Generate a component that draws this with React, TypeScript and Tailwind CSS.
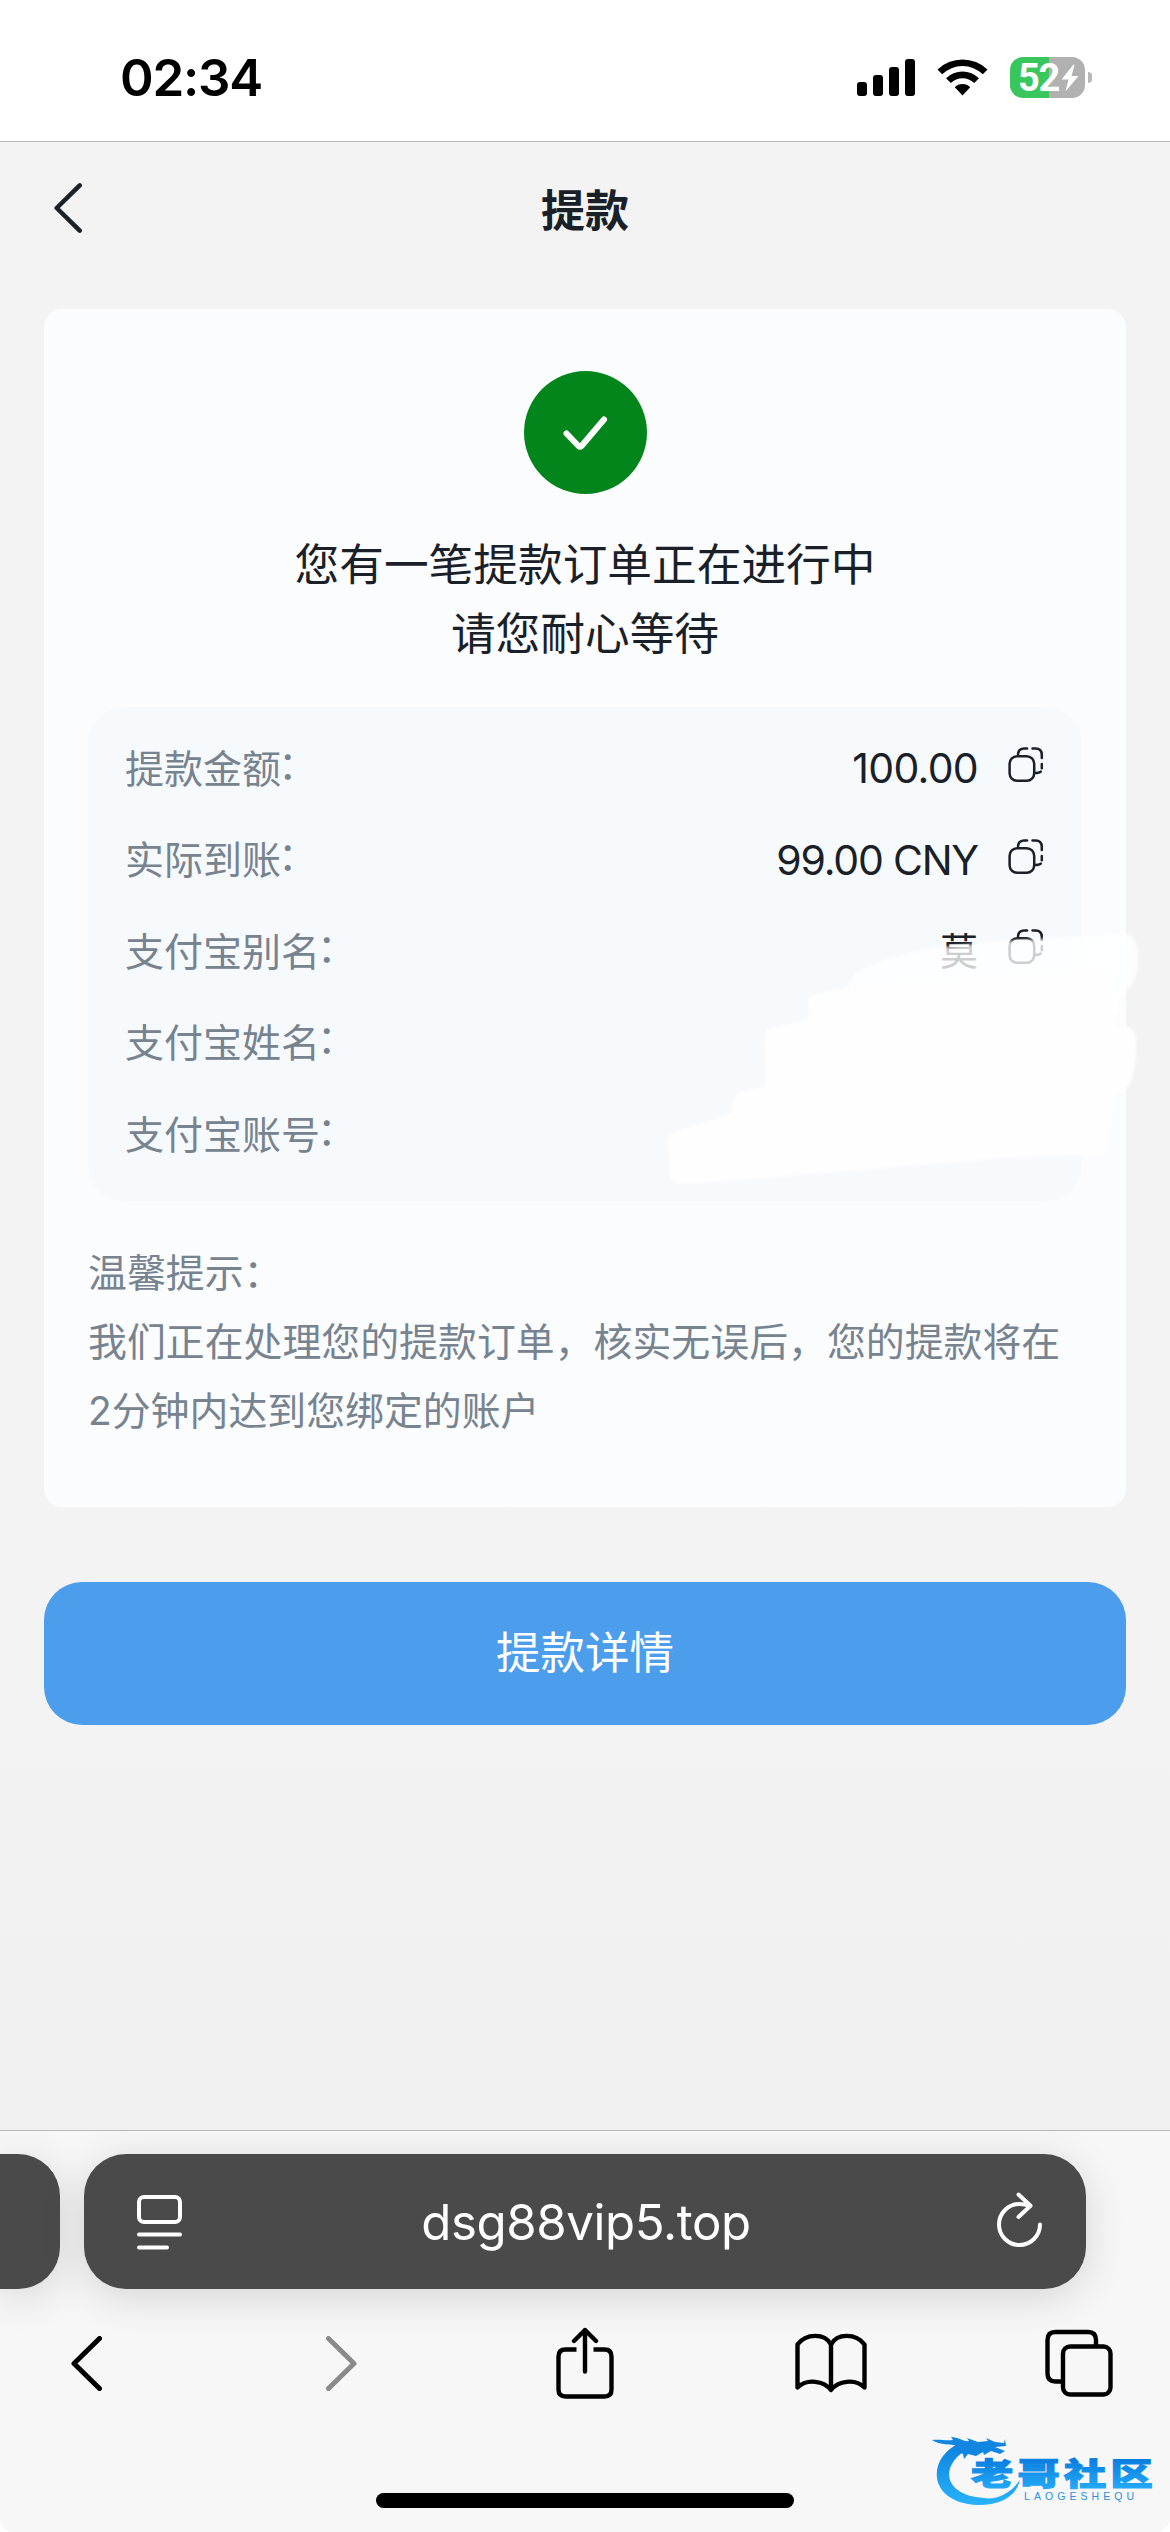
import { clsx } from "clsx";

const rows = [
  { label: "提款金额", value: "100.00", text: "text-[41px] tracking-[-0.7px]", icon: "-mt-[8px]" },
  { label: "实际到账", value: "99.00 CNY", text: "text-[41px] tracking-[-1.2px]", icon: "-mt-[6px]" },
  { label: "支付宝别名", value: "莫", text: "text-[38px]", icon: "-mt-[9px]" },
  { label: "支付宝姓名" },
  { label: "支付宝账号" },
];

function StatusBar() {
  return (
    <div className="h-[142px] shrink-0 bg-white border-b border-[#b8baba] flex items-start justify-between pl-[120px] pr-[78px] pt-[57px]">
      <span className="text-[51px] leading-[42px] font-semibold text-black tracking-[-1.2px]">
        02:34
      </span>
      <div className="flex items-start">
        <svg width="58" height="42" viewBox="0 0 58 42" className="mr-[22px]">
          <rect x="0" y="25" width="10" height="14" rx="3" />
          <rect x="16" y="18" width="10" height="21" rx="3" />
          <rect x="32" y="10" width="10" height="29" rx="3" />
          <rect x="48" y="2" width="10" height="37" rx="3" />
        </svg>
        <svg width="51" height="42" viewBox="0 0 51 42" className="mr-[22px]">
          <path d="M0.5 12.5 A36 36 0 0 1 50.5 12.5 L45.8 17.3 A29 29 0 0 0 5.2 17.3 Z" />
          <path d="M9 21.2 A23.5 23.5 0 0 1 42 21.2 L37.2 26 A17 17 0 0 0 13.8 26 Z" />
          <path d="M17.8 30.2 A11 11 0 0 1 33.2 30.2 L25.5 38.5 Z" />
        </svg>
        <div className="flex h-[41px] w-[75px] items-center rounded-[13px] bg-linear-to-r from-[#39c65d] from-52% to-[#b1b1b1] to-52% pl-[8px]">
          <span className="w-[43px] font-[Roboto] text-[38px] leading-[40px] font-bold tracking-[-1.2px] text-white">
            52
          </span>
          <svg width="18" height="28" viewBox="0 0 18 28" fill="#fff">
            <path d="M12.5 0.5 L0.5 15.5 H7.5 L4.5 27.5 L17.5 12 H10.5 L13.5 1 Z" />
          </svg>
        </div>
        <div className="ml-[3px] mt-[15px] h-[11px] w-[4px] rounded-r-full bg-[#b8b8b8]" />
      </div>
    </div>
  );
}

function CopyIcon({ className }: { className?: string }) {
  return (
    <svg
      width="36"
      height="36"
      viewBox="0 0 36 36"
      fill="none"
      stroke="#1a2027"
      strokeWidth="2.5"
      strokeLinecap="round"
      className={className}
    >
      <rect x="1.6" y="9.2" width="24.6" height="24.6" rx="7.5" />
      <path d="M10 7.5 C10.2 4.2 11.8 2 14.6 1.7" />
      <path d="M16 1.6 H19" />
      <path d="M24.5 1.6 H27.5 C31.5 1.6 33.8 4 33.8 8 V11" />
      <path d="M33.8 17 V21.2" />
      <path d="M32.8 24.6 C31.8 25.6 30 26 27 26" />
    </svg>
  );
}

/* white marker over the private account fields */
function Scribble() {
  return (
    <svg
      width="480"
      height="270"
      viewBox="0 0 480 270"
      className="absolute left-[574px] top-[222px] blur-[1.5px]"
    >
      <path
        d="M182 77 Q183 47 205 38 Q240 22 300 16 Q380 9 462 5 Q474 6 476 22 Q477 57 463 61 L440 130 L190 130 Z"
        fill="#fff"
        opacity="0.78"
      />
      <path
        d="M182 60 L150 66 Q146 70 146 92 L105 100 Q102 106 104 158 L75 164 Q70 173 70 185 L12 203 Q6 206 6 215 L9 251 Q13 257 60 252 L240 237 L355 228 L443 225 Q450 220 451 169 L466 158 Q475 145 474 107 Q472 98 464 98 L452 98 L450 45 Q380 44 340 49 Q260 53 182 60 Z"
        fill="#fefefe"
      />
    </svg>
  );
}

function Chevron({ flip, className }: { flip?: boolean; className?: string }) {
  return (
    <svg
      viewBox="0 0 31 55"
      fill="none"
      stroke="currentColor"
      strokeWidth="5"
      strokeLinecap="round"
      strokeLinejoin="round"
      className={clsx(flip && "-scale-x-100", className)}
    >
      <path d="M28.5 2.5 L3 27.5 L28.5 52.5" />
    </svg>
  );
}

function ResultCard() {
  return (
    <div className="mx-[44px] h-[1198px] rounded-[18px] bg-[#fbfcfe] px-[44px] pt-[62px]">
      <div className="mx-auto flex size-[123px] items-center justify-center rounded-full bg-[#02851b]">
        <svg width="46" height="36" viewBox="0 0 46 36" fill="none" stroke="#fff" strokeWidth="6" strokeLinecap="round" strokeLinejoin="round">
          <path d="M4.5 18.5 L16.5 31 Q18 32.3 19.5 31 L42 4.5" />
        </svg>
      </div>
      <p className="mt-[37px] text-center text-[44.7px] leading-[69px] text-[#1a2027]">
        您有一笔提款订单正在进行中
        <br />
        请您耐心等待
      </p>

      <div className="relative mt-[38px] h-[494px] rounded-[36px] bg-[#f7fafd] px-[37px] pt-[16px]">
        {rows.map((row) => (
          <div key={row.label} className="flex h-[91.5px] items-center">
            <span className="text-[39px] leading-[60px] text-[#77838f]">{row.label}</span>
            <span className="-ml-[3px] mb-[8px] text-[39px] leading-[60px] text-[#77838f]">：</span>
            {row.value && (
              <>
                <span className={clsx("ml-auto text-[#1a2027]", row.text)}>{row.value}</span>
                <CopyIcon className={clsx("ml-[30px] mr-px", row.icon)} />
              </>
            )}
          </div>
        ))}
        <Scribble />
      </div>

      <p className="-mr-5 mt-[37px] text-[38.9px] leading-[69px] text-[#77838f]">
        温馨提示：
        <br />
        我们正在处理您的提款订单，核实无误后，您的提款将在
        <br />
        2分钟内达到您绑定的账户
      </p>
    </div>
  );
}

function AddressBar() {
  return (
    <div className="flex h-[135px] gap-6">
      <div className="w-[60px] rounded-r-[42px] bg-[#4a4a4a] shadow-[0_8px_44px_rgba(0,0,0,0.14)]" />
      <div className="flex w-[1002px] items-center justify-between rounded-[42px] bg-[#4a4a4a] pl-[52px] pr-[43px] shadow-[0_8px_44px_rgba(0,0,0,0.14)]">
        <svg width="47" height="56" viewBox="0 0 47 56" fill="none" stroke="#fff" strokeWidth="4" strokeLinecap="round">
          <rect x="3" y="3" width="41" height="25" rx="5" />
          <path d="M3 40.5 H44 M3 53.5 H31" />
        </svg>
        <span className="mr-[8px] text-[49.2px] leading-[60px] tracking-[-0.4px] text-white">dsg88vip5.top</span>
        <svg width="46" height="56" viewBox="0 0 46 56" fill="none" stroke="#fff" strokeWidth="4" strokeLinecap="round" strokeLinejoin="round" className="overflow-visible">
          <path d="M43 30.5 A20.5 20.5 0 1 1 22.5 10 Q28 10 33 12" />
          <path d="M21.5 0.5 L33.5 11.8 L21.5 23" />
        </svg>
      </div>
    </div>
  );
}

function Toolbar() {
  return (
    <div className="flex h-[72px] items-center pl-[71px]">
      <Chevron className="h-[55px] w-[31px]" />
      <Chevron flip className="ml-[224px] h-[55px] w-[31px] text-[#8a8a8a]" />
      <svg width="58" height="72" viewBox="0 0 58 72" fill="none" stroke="#000" strokeWidth="4.4" strokeLinecap="round" strokeLinejoin="round" className="ml-[199px]">
        <path d="M20.5 22.5 H9.5 Q2.5 22.5 2.5 29.5 V62.5 Q2.5 69.5 9.5 69.5 H48.5 Q55.5 69.5 55.5 62.5 V29.5 Q55.5 22.5 48.5 22.5 H37.5" strokeLinecap="butt" />
        <path d="M29 44.5 V3 M18 14 L29 3 L40 14" />
      </svg>
      <svg width="72" height="60" viewBox="0 0 72 60" fill="none" stroke="#000" strokeWidth="4.4" strokeLinecap="round" strokeLinejoin="round" className="ml-[181px]">
        <path d="M36 57 C29 48 12 45 2.5 54.5 V11.5 C11 0 30 0 36 11.5 C42 0 61 0 69.5 11.5 V54.5 C60 45 43 48 36 57 V11.5" />
      </svg>
      <svg width="68" height="68" viewBox="0 0 68 68" fill="none" stroke="#000" strokeWidth="4.4" className="ml-[178px]">
        <path d="M18 52.5 H10.5 Q2.5 52.5 2.5 44.5 V11 Q2.5 3 10.5 3 H43 Q51 3 51 11 V17" />
        <rect x="18" y="17.5" width="47.5" height="48" rx="7" />
      </svg>
    </div>
  );
}

function Watermark() {
  return (
    <svg width="226" height="76" viewBox="0 0 226 76" className="absolute bottom-[22px] right-[12px]">
      <defs>
        <linearGradient id="wm" x1="0" y1="0" x2="0" y2="1">
          <stop offset="0" stopColor="#0d80dd" />
          <stop offset="1" stopColor="#27b3fb" />
        </linearGradient>
        <linearGradient id="wmText" gradientUnits="userSpaceOnUse" x1="0" y1="26" x2="0" y2="54">
          <stop offset="0" stopColor="#0b7fe0" />
          <stop offset="1" stopColor="#22a9f7" />
        </linearGradient>
      </defs>
      <path d="M30 8 C-6 22 -6 69 46 71 C70 71 84 62 88 46 C78 60 64 66 52 64 C12 62 6 32 36 15 L46 19 L54 12 Z" fill="url(#wm)" />
      <path
        d="M0 6 C8 5 13 7 21 6 L19 3 C27 3 31 8 37 7 L35 4 L46 8 L56 7 L54 4 L63 8 L72 9 L73 5 L74 12 L63 13 L73 17 L68 20 L59 17 L52 21 L51 18 L44 22 L36 20 L32 25 L31 20 L24 17 L28 13 C20 9 8 12 0 6 Z"
        fill="#1186e0"
      />
      <g transform="translate(39 0) scale(1.36 1)">
        <text
          x="0"
          y="51"
          fontSize="31"
          fontWeight="900"
          letterSpacing="3.2"
          fill="url(#wmText)"
          stroke="url(#wmText)"
          strokeWidth="1.2"
          fontFamily="'Noto Sans CJK SC', sans-serif"
        >
          老哥社区
        </text>
      </g>
      <text x="92" y="66" fontSize="10.5" textLength="110" fill="#2a8fdc" fontFamily="'Liberation Sans', sans-serif">
        LAOGESHEQU
      </text>
    </svg>
  );
}

export default function App() {
  return (
    <div className="flex h-[2532px] w-[1170px] flex-col overflow-hidden bg-white font-['Inter','Noto_Sans_CJK_SC',sans-serif]">
      <StatusBar />

      <main className="flex flex-1 flex-col bg-linear-to-b from-[#f3f3f3] from-80% to-[#f0f0f0]">
        <header className="grid h-[138px] grid-cols-3 items-center px-[54px] text-[#1a2027]">
          <Chevron className="-mt-[7px] h-[50px] w-[28px]" />
          <h1 className="text-center text-[44px] font-bold">提款</h1>
        </header>
        <div className="h-[29px]" />
        <ResultCard />
        <button className="mx-[44px] mt-[75px] h-[143px] rounded-[38px] bg-[#4c9eec] text-[44.5px] text-white">
          提款详情
        </button>
      </main>

      <footer className="relative h-[402px] shrink-0 overflow-hidden rounded-b-[14px] border-t border-[#b8baba] bg-[#f7f7f7] pt-[23px]">
        <AddressBar />
        <div className="h-[38px]" />
        <Toolbar />
        <div className="mx-auto mt-[94px] h-[15px] w-[418px] rounded-full bg-black" />
        <Watermark />
      </footer>
    </div>
  );
}
